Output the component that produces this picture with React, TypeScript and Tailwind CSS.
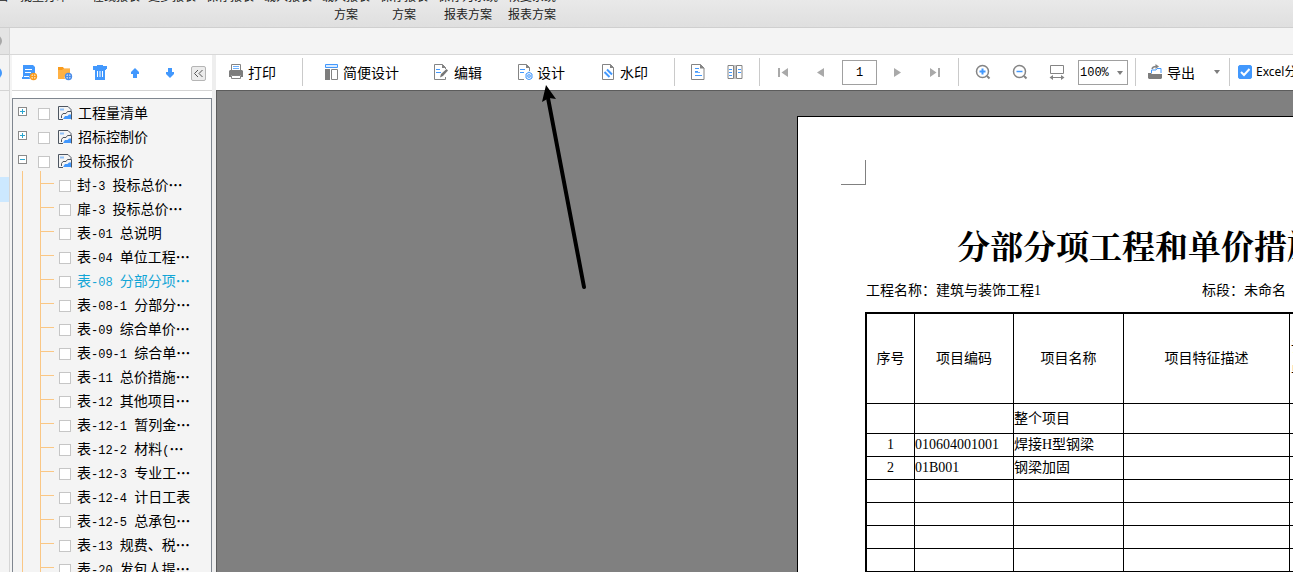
import { useState } from 'react';
import type { ReactNode } from 'react';

interface RibbonItem {
    lines: string[];
    className: string;
}

interface ReportRow {
    no: string;
    code: string;
    name: string;
}

const ribbonItems: RibbonItem[] = [
    { lines: ['图'], className: '-ml-1 w-3' },
    { lines: ['批量打印'], className: 'ml-3 w-12' },
    { lines: ['在线报表'], className: 'ml-6 w-12' },
    { lines: ['更多报表'], className: 'ml-2 w-12' },
    { lines: ['保存报表'], className: 'ml-[10px] w-12' },
    { lines: ['载入报表'], className: 'ml-[10px] w-12' },
    { lines: ['载入报表', '方案'], className: 'ml-[10px] w-12' },
    { lines: ['保存报表', '方案'], className: 'ml-[10px] w-12' },
    { lines: ['保存为系统', '报表方案'], className: 'ml-[10px] w-[60px]' },
    { lines: ['恢复系统', '报表方案'], className: 'ml-[10px] w-12' },
];

const groups = [
    { name: '工程量清单', open: false },
    { name: '招标控制价', open: false },
    { name: '投标报价', open: true },
];

const reports = [
    '封-3 投标总价…',
    '扉-3 投标总价…',
    '表-01 总说明',
    '表-04 单位工程…',
    '表-08 分部分项…',
    '表-08-1 分部分…',
    '表-09 综合单价…',
    '表-09-1 综合单…',
    '表-11 总价措施…',
    '表-12 其他项目…',
    '表-12-1 暂列金…',
    '表-12-2 材料(…',
    '表-12-3 专业工…',
    '表-12-4 计日工表',
    '表-12-5 总承包…',
    '表-13 规费、税…',
    '表-20 发包人提…',
];

const rows: ReportRow[] = [
    { no: '1', code: '010604001001', name: '焊接H型钢梁' },
    { no: '2', code: '01B001', name: '钢梁加固' },
    { no: '', code: '', name: '' },
    { no: '', code: '', name: '' },
    { no: '', code: '', name: '' },
    { no: '', code: '', name: '' },
    { no: '', code: '', name: '' },
];

function Icon({ children }: { children: ReactNode }) {
    return (
        <svg viewBox="0 0 16 16" className="size-4 shrink-0" fill="none" aria-hidden="true">
            {children}
        </svg>
    );
}

// Latin runs are set in a monospace face, half the width of a Chinese character
function MixedText({ text }: { text: string }) {
    return (
        <span className="whitespace-pre">
            {text.split(/([\x20-\x7e]+|…)/).map((part, i) => {
                if (part === '…') return <span key={i} className="font-bold">{part}</span>;
                if (i % 2 === 0) return part;
                return <span key={i} className="font-['Liberation_Mono',monospace] text-xs">{part}</span>;
            })}
        </span>
    );
}

function ToolButton({ label, icon, className = '' }: { label: string; icon: ReactNode; className?: string }) {
    return (
        <button type="button" className={`flex shrink-0 items-center gap-1 whitespace-nowrap ${className}`}>
            <Icon>{icon}</Icon>
            {label}
        </button>
    );
}

function IconButton({ label, icon, className = '' }: { label: string; icon: ReactNode; className?: string }) {
    return (
        <button type="button" aria-label={label} className={`shrink-0 ${className}`}>
            <Icon>{icon}</Icon>
        </button>
    );
}

function Separator({ className }: { className: string }) {
    return <span className={`h-7 w-px shrink-0 bg-[#cacaca] ${className}`} />;
}

function Ribbon() {
    return (
        <header className="flex h-7 shrink-0 items-start overflow-hidden border-b border-[#cfcfcf] bg-linear-to-b from-[#e9e9e9] to-[#dfdfdf]">
            {ribbonItems.map((item, i) => (
                <button
                    key={i}
                    type="button"
                    className={`-mt-[13px] shrink-0 text-center text-xs leading-[18px] whitespace-nowrap text-[#222] ${item.className}`}
                >
                    {item.lines.map((line) => (
                        <span key={line} className="block">{line}</span>
                    ))}
                </button>
            ))}
        </header>
    );
}

function SidebarToolbar() {
    return (
        <div className="flex h-9 shrink-0 items-center border-b border-[#d4d4d4] bg-white pt-px pl-[10px]">
            <div className="flex gap-[19px]">
                <IconButton
                    label="新建报表"
                    icon={
                        <>
                            <path d="M1 0h10l2 2v6a4.500 4.500 0 0 0-5 6H0v-2h1z" fill="#4298fd" />
                            <path d="M3 4.500h7M3 7.500h6M2 11.500h5" stroke="#fff" />
                            <circle cx="11.500" cy="11.500" r="3" fill="#fff" stroke="#f99b1c" strokeWidth="1.400" />
                            <path d="M11.500 9v5M9 11.500h5" stroke="#f99b1c" strokeWidth="1.400" />
                        </>
                    }
                />
                <IconButton
                    label="新建文件夹"
                    icon={
                        <>
                            <path d="M1 2h5l1 1.500h6V6H1z" fill="#f99b1c" />
                            <path d="M1 5h4l1-1h7v4a4.500 4.500 0 0 0-5 6H1z" fill="#ffb144" />
                            <circle cx="11.500" cy="11.500" r="3" fill="#fff" stroke="#4a8ce8" strokeWidth="1.400" />
                            <path d="M11.500 9v5M9 11.500h5" stroke="#4a8ce8" strokeWidth="1.400" />
                        </>
                    }
                />
                <IconButton
                    label="删除"
                    icon={
                        <>
                            <path d="M5 1V0h6v1h4v3h-1v1h-1v10H3V5H1V1z" fill="#4298fd" />
                            <path d="M5.500 6v6M8 6v6M10.500 6v6" stroke="#fff" />
                        </>
                    }
                />
                <IconButton label="上移" icon={<path d="M8 3l4 4v2h-2v4H6V9H4V7z" fill="#4298fd" />} />
                <IconButton label="下移" icon={<path d="M8 13l4-4V7h-2V3H6v4H4v2z" fill="#4298fd" />} />
            </div>
            <button
                type="button"
                aria-label="收起"
                className="mt-px ml-[13px] flex size-[15px] items-center justify-center rounded-xs border border-[#b5b5b5] bg-[#ececec]"
            >
                <svg viewBox="0 0 11 9" className="h-[9px] w-[11px]" fill="none" stroke="#555">
                    <path d="M5 1L1.500 4.500 5 8M9.500 1L6 4.500 9.500 8" />
                </svg>
            </button>
        </div>
    );
}

function CheckBox({ label }: { label: string }) {
    return (
        <input
            type="checkbox"
            aria-label={label}
            className="mt-0.5 size-3 shrink-0 appearance-none border border-[#c6c6c6] bg-white checked:bg-[#4298fd]"
        />
    );
}

function ReportTree() {
    const [selected, setSelected] = useState(4);

    return (
        <div className="mt-[7px] min-h-0 flex-1 overflow-hidden border border-b-0 border-[#7f868f] bg-[#f4f4f4] pt-0.5">
            <ul>
                {groups.map((group) => (
                    <li key={group.name}>
                        <div className="flex h-6 items-center pl-[5px]">
                            <button
                                type="button"
                                aria-label={group.open ? '折叠' : '展开'}
                                className="mb-1 flex size-[9px] items-center justify-center border border-[#8a8a8a] bg-white"
                            >
                                <svg viewBox="0 0 7 7" className="size-[7px]" stroke="#2aa5cf">
                                    <path d={group.open ? 'M1 3.500h5' : 'M1 3.500h5M3.500 1v5'} />
                                </svg>
                            </button>
                            <label className="flex items-center pl-[11px]">
                                <CheckBox label={group.name} />
                                <svg viewBox="0 0 14 14" className="mr-1.5 ml-2 size-[14px]" fill="none">
                                    <path d="M5 13.500H.5V.5h9.500l3 3V5" stroke="#4d5560" />
                                    <path d="M2 2.500h4v2H2z" fill="#8fc0f8" />
                                    <path d="M3.500 12V9.500l1.500-2h3l1.500-2h4v8" stroke="#4d5560" />
                                    <path d="M5 13l2-3h2.500l1.500-1.500h2V13z" fill="#4298fd" />
                                </svg>
                                <span className="pb-0.5">{group.name}</span>
                            </label>
                        </div>
                        {group.open && (
                            <div className="-mt-0.5 ml-[9px] border-l border-[#fac785] pl-[17px]">
                                <ul className="border-l border-[#fac785] pt-0.5">
                                    {reports.map((name, i) => (
                                        <li
                                            key={name}
                                            onClick={() => setSelected(i)}
                                            className={`flex h-6 items-center ${i === selected ? 'text-[#12a5d6]' : 'text-black'}`}
                                        >
                                            <span className="mr-[5px] mb-[3px] h-px w-[13px] bg-[#fac785]" />
                                            <label className="flex items-center gap-1.5 pb-px">
                                                <CheckBox label={name} />
                                                <MixedText text={name} />
                                            </label>
                                        </li>
                                    ))}
                                </ul>
                            </div>
                        )}
                    </li>
                ))}
            </ul>
        </div>
    );
}

function PreviewToolbar() {
    const [page, setPage] = useState('1');

    return (
        <div className="flex h-[35px] shrink-0 items-center overflow-hidden bg-white pb-px pl-3">
            <ToolButton
                label="打印"
                icon={
                    <>
                        <path d="M3.500 6V.5h9V6" fill="#fff" stroke="#848484" />
                        <path d="M5 2.500h6M5 4.500h6" stroke="#6db0fd" />
                        <path d="M1 7l1-1h12l1 1v6h-2v-2H3v2H1z" fill="#7d7d7d" />
                        <path d="M3.500 11.500h9v3h-9z" fill="#fff" stroke="#848484" />
                    </>
                }
            />
            <Separator className="mr-5 ml-[26px]" />
            <ToolButton
                label="简便设计"
                icon={
                    <>
                        <path d="M2.500 .5h12v3h-12z" fill="#dcecff" stroke="#4298fd" />
                        <path d="M2 5h5v11H2z" fill="#7d7d7d" />
                        <path d="M8.500 5.500h6v10h-6z" fill="#fff" stroke="#848484" />
                    </>
                }
            />
            <ToolButton
                label="编辑"
                className="ml-[35px]"
                icon={
                    <>
                        <path d="M11.500 5V3.500l-3-3H.5v15h11V13" stroke="#848484" />
                        <path d="M8 0l4 4H8z" fill="#848484" />
                        <path d="M2 5.500h4M2 8.500h5" stroke="#4298fd" />
                        <path d="M6 13.500l1-3.500 5.500-5L14 6.500 9 12z" fill="#777" />
                    </>
                }
            />
            <ToolButton
                label="设计"
                className="ml-[35px]"
                icon={
                    <>
                        <path d="M12.500 7V3.500l-3-3h-8v15H7" stroke="#848484" />
                        <path d="M9 0l4 4H9z" fill="#848484" />
                        <path d="M3 5.500h5M3 8.500h4" stroke="#4298fd" />
                        <path d="M12 8l3 2v4l-3 2-3-2v-4z" fill="#d9eaff" stroke="#4298fd" />
                        <circle cx="12" cy="12" r="1.300" fill="#fff" stroke="#4298fd" />
                    </>
                }
            />
            <ToolButton
                label="水印"
                className="ml-[35px]"
                icon={
                    <>
                        <path d="M2.500 .5h8l3 3v12h-11z" stroke="#848484" />
                        <path d="M10 0l4 4h-4z" fill="#848484" />
                        <path d="M4.500 8l5 5M7 5.500l5 5" stroke="#4298fd" strokeWidth="2" />
                    </>
                }
            />
            <Separator className="mr-[15px] ml-[26px]" />
            <IconButton
                label="单页"
                icon={
                    <>
                        <path d="M1.500 .5h9l3.500 3.500v11.500H1.500z" stroke="#848484" />
                        <path d="M10 0l4.500 4.500H10z" fill="#848484" />
                        <path d="M5 4.500h4M5 7.500h3M5 11.500h7" stroke="#4298fd" />
                        <path d="M5 8h5v1H5z" fill="#6db0fd" />
                    </>
                }
            />
            <IconButton
                label="双页"
                className="ml-[21px]"
                icon={
                    <>
                        <path d="M8 1v14" stroke="#c4c4c4" strokeWidth="2" />
                        <path d="M1 1.500h5.500v13H1zM9.500 1.500H15v13H9.500z" fill="#fff" stroke="#848484" />
                        <path d="M2 5.500h3M2 8.500h3M2 11.500h3M11 5.500h3M11 8.500h3" stroke="#4298fd" />
                    </>
                }
            />
            <Separator className="mx-4" />
            <IconButton label="首页" icon={<path d="M2 4h2v9H2zM12 4v9L5.500 8.500z" fill="#a9a9a9" />} />
            <IconButton label="上一页" className="ml-5" icon={<path d="M12 4v9L5 8.500z" fill="#a9a9a9" />} />
            <input
                aria-label="页码"
                value={page}
                onChange={(e) => setPage(e.target.value)}
                className="mt-px mr-3 ml-[14px] h-[25px] w-[35px] shrink-0 border border-[#a0a0a0] bg-white px-1 text-center font-['Liberation_Mono',monospace] text-xs"
            />
            <IconButton label="下一页" icon={<path d="M5 4v9l7-4.500z" fill="#a9a9a9" />} />
            <IconButton label="末页" className="ml-[22px]" icon={<path d="M11 4h2v9h-2zM3 4v9l6.500-4.500z" fill="#a9a9a9" />} />
            <Separator className="mr-4 ml-[15px]" />
            <IconButton
                label="放大"
                icon={
                    <>
                        <circle cx="7.500" cy="7.500" r="6" stroke="#848484" strokeWidth="1.500" />
                        <path d="M12 12l2.500 2.500" stroke="#848484" strokeWidth="2" />
                        <path d="M4.500 7.500h6M7.500 4.500v6" stroke="#4298fd" strokeWidth="2" />
                    </>
                }
            />
            <IconButton
                label="缩小"
                className="ml-[21px]"
                icon={
                    <>
                        <circle cx="7.500" cy="7.500" r="6" stroke="#848484" strokeWidth="1.500" />
                        <path d="M12 12l2.500 2.500" stroke="#848484" strokeWidth="2" />
                        <path d="M4.500 7.500h6" stroke="#4298fd" strokeWidth="1.500" />
                    </>
                }
            />
            <IconButton
                label="适合宽度"
                className="ml-[21px]"
                icon={
                    <>
                        <path d="M1.500 1.500h13v8h-13z" stroke="#848484" />
                        <path d="M2 13.500h12" stroke="#848484" />
                        <path d="M4 11v5l-3.500-2.500zM12 11v5l3.500-2.500z" fill="#848484" />
                    </>
                }
            />
            <div className="relative mt-px ml-[13px] shrink-0">
                <select
                    aria-label="缩放比例"
                    defaultValue="100%"
                    className="block h-[25px] w-[50px] appearance-none border border-[#a0a0a0] bg-white pl-px font-['Liberation_Mono',monospace] text-xs"
                >
                    <option>100%</option>
                </select>
                <svg viewBox="0 0 6 4" className="pointer-events-none absolute top-[11px] right-[5px] h-1 w-1.5">
                    <path d="M0 0h6L3 4z" fill="#7d7d7d" />
                </svg>
            </div>
            <Separator className="mr-[11px] ml-[7px]" />
            <ToolButton
                label="导出"
                icon={
                    <>
                        <path d="M4.500 9V6H9l1-1.500h4V9" fill="#fff" stroke="#4298fd" />
                        <path d="M5 5c.5-2 2-2.500 4-2.500" stroke="#848484" strokeWidth="1.500" />
                        <path d="M8.500 0L12 2.500 8.500 5z" fill="#848484" />
                        <path d="M1 9h3l1 1h10v4l-1 1H2l-1-1z" fill="#7d7d7d" />
                    </>
                }
            />
            <button type="button" aria-label="导出选项" className="ml-[19px] flex w-2 shrink-0 items-center">
                <svg viewBox="0 0 6 4" className="h-1 w-1.5">
                    <path d="M0 0h6L3 4z" fill="#7d7d7d" />
                </svg>
            </button>
            <Separator className="mr-2 ml-[7px]" />
            <label className="flex shrink-0 items-center gap-1 font-['Noto_Sans','Noto_Sans_CJK_SC',sans-serif] text-xs whitespace-nowrap">
                <span className="relative flex">
                    <input
                        type="checkbox"
                        defaultChecked
                        className="peer size-[14px] appearance-none rounded-xs border border-[#4298fd] checked:bg-[#4298fd]"
                    />
                    <svg
                        viewBox="0 0 14 14"
                        fill="none"
                        stroke="#fff"
                        strokeWidth="2"
                        className="pointer-events-none absolute inset-0 hidden size-[14px] peer-checked:block"
                    >
                        <path d="M3 7l3 3 5.500-6" />
                    </svg>
                </span>
                Excel分
            </label>
        </div>
    );
}

function ReportPage() {
    return (
        <article className="min-h-0 flex-1 overflow-hidden border-t border-l border-black bg-white pt-[43px] pl-[43px]">
            <div className="size-[25px] border-r border-b border-[#808080]" />
            <div className="ml-6">
                <h1 className="pt-9 pl-[92px] font-['Noto_Serif_CJK_SC','Noto_Sans_CJK_SC',serif] text-[33px] leading-12 font-bold whitespace-nowrap">
                    分部分项工程和单价措施
                </h1>
                <div className="flex h-[43px] items-center pl-px font-['Liberation_Serif','Noto_Sans_CJK_SC',serif] text-sm whitespace-nowrap">
                    <span className="w-[336px] shrink-0">工程名称：建筑与装饰工程1</span>
                    <span>标段：未命名</span>
                </div>
                <table className="w-[480px] table-fixed border-separate border-spacing-0 border-t-2 border-l-2 border-black font-['Liberation_Serif','Noto_Sans_CJK_SC',serif] text-sm leading-[22px] [&_td]:border-r [&_td]:border-b [&_td]:border-black [&_td]:p-0 [&_th]:border-r [&_th]:border-b [&_th]:border-black [&_th]:p-0 [&_th]:font-normal">
                    <colgroup>
                        <col className="w-12" />
                        <col className="w-[99px]" />
                        <col className="w-[110px]" />
                        <col className="w-[166px]" />
                        <col />
                    </colgroup>
                    <thead>
                        <tr className="h-[90px]">
                            <th>序号</th>
                            <th>项目编码</th>
                            <th>项目名称</th>
                            <th>项目特征描述</th>
                            <th className="text-left">
                                <span className="block pl-px">计量<br />单位</span>
                            </th>
                        </tr>
                    </thead>
                    <tbody>
                        <tr className="h-[30px]">
                            <td />
                            <td />
                            <td>整个项目</td>
                            <td />
                            <td />
                        </tr>
                        {rows.map((row, i) => (
                            <tr key={i} className="h-[23px]">
                                <td className="text-center">{row.no}</td>
                                <td>{row.code}</td>
                                <td>{row.name}</td>
                                <td />
                                <td />
                            </tr>
                        ))}
                    </tbody>
                </table>
            </div>
        </article>
    );
}

export default function App() {
    return (
        <div className="relative flex h-screen flex-col overflow-hidden bg-[#f4f4f4] font-['Noto_Sans_CJK_SC',sans-serif] text-sm text-black">
            <Ribbon />
            <div className="flex min-h-0 flex-1">
                {/* Edge of the project panel */}
                <aside className="w-[10px] shrink-0 overflow-hidden border-r border-[#d6d6d6]">
                    <div className="flex h-[27px] items-center border-b border-[#d0d0d0] bg-[#e4e4e4]">
                        <span className="-ml-[10px] size-3 rounded-full bg-[#a8a8a8]" />
                    </div>
                    <div className="flex h-9 items-center border-b border-[#d4d4d4]">
                        <span className="-ml-[10px] size-3 rounded-full bg-[#4298fd]" />
                    </div>
                    <div className="mt-[86px] h-[25px] bg-[#cce8ff]" />
                </aside>
                <div className="flex min-w-0 flex-1 flex-col">
                    <div className="h-[27px] shrink-0 border-b border-[#d8d8d8]" />
                    <div className="flex min-h-0 flex-1">
                        <nav className="ml-0.5 flex w-[200px] shrink-0 flex-col bg-white">
                            <SidebarToolbar />
                            <ReportTree />
                        </nav>
                        <div className="w-1 shrink-0 bg-[#eeeeee]" />
                        <main className="flex min-w-0 flex-1 flex-col">
                            <PreviewToolbar />
                            <div className="flex min-h-0 flex-1 flex-col border-t border-l border-[#5c5c5c] bg-[#808080] pt-[25px] pl-[580px]">
                                <ReportPage />
                            </div>
                        </main>
                    </div>
                </div>
            </div>
            {/* Pointer to the design button */}
            <svg viewBox="0 0 50 210" className="pointer-events-none absolute top-[84px] left-[540px] h-[210px] w-[50px]">
                <path d="M8 14L44 203" stroke="#000" strokeWidth="4" strokeLinecap="round" />
                <path d="M6 1L16 15 9 14 2 18z" fill="#000" />
            </svg>
        </div>
    );
}
